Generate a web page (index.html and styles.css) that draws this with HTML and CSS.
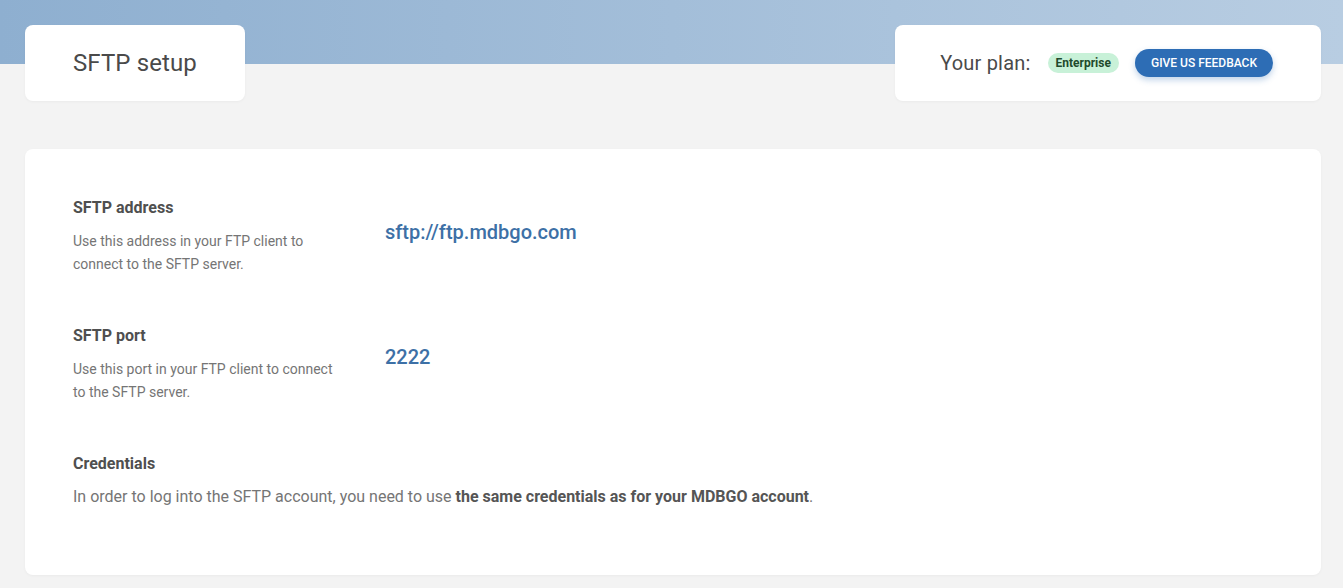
FILE: index.html
```html
<!DOCTYPE html>
<html lang="en">
<head>
<meta charset="utf-8">
<title>SFTP setup</title>
<link rel="stylesheet" href="styles.css">
</head>
<body>
<div class="page">
  <div class="top-row">
    <div class="card title-card"><h1 class="title">SFTP setup</h1></div>
    <div class="card plan-card">
      <span class="plan-label">Your plan:</span>
      <span class="badge">Enterprise</span>
      <button class="btn-feedback">GIVE US FEEDBACK</button>
    </div>
  </div>
  <div class="card main-card">
    <div class="row">
      <div class="info">
        <div class="info-title">SFTP address</div>
        <p class="info-desc">Use this address in your FTP client to connect to the SFTP server.</p>
      </div>
      <div class="value">sftp://ftp.mdbgo.com</div>
    </div>
    <div class="row">
      <div class="info">
        <div class="info-title">SFTP port</div>
        <p class="info-desc">Use this port in your FTP client to connect to the SFTP server.</p>
      </div>
      <div class="value">2222</div>
    </div>
    <div class="creds">
      <div class="info-title">Credentials</div>
      <p class="creds-text">In order to log into the SFTP account, you need to use <strong>the same credentials as for your MDBGO account</strong>.</p>
    </div>
  </div>
</div>
</body>
</html>
```

FILE: styles.css
```css
* { box-sizing: border-box; }
html, body { margin: 0; padding: 0; }
body {
  font-family: Roboto, "Noto Sans", Arial, sans-serif;
  background-color: #f3f3f3;
  background-image: linear-gradient(90deg, #8eafd0 0%, #a3bed9 50%, #b8cde2 100%);
  background-repeat: no-repeat;
  background-size: 100% 64px;
  min-height: 588px;
}
.page {
  padding: 25px 22px 0 25px;
}
.card {
  background: #fff;
  border-radius: 8px;
  box-shadow: 0 1px 3px rgba(0,0,0,0.04);
}
.top-row {
  display: flex;
  justify-content: space-between;
  align-items: flex-start;
}
.title-card {
  width: 220px;
  height: 76px;
  display: flex;
  align-items: center;
  padding: 0 48px;
}
.title {
  margin: 0;
  font-size: 24px;
  font-weight: 400;
  color: #4a4a4a;
  white-space: nowrap;
  letter-spacing: 0.1px;
}
.plan-card {
  width: 426px;
  height: 76px;
  display: flex;
  align-items: center;
  justify-content: flex-end;
  padding: 0 48px 0 20px;
}
.plan-card > * {
  flex-shrink: 0;
  white-space: nowrap;
}
.plan-label {
  font-size: 20px;
  color: #4a4a4a;
  margin-right: 17px;
  letter-spacing: 0.2px;
}
.badge {
  background: #c8f1d8;
  color: #1f4a2c;
  font-size: 12px;
  font-weight: 700;
  border-radius: 10px;
  height: 20px;
  line-height: 20px;
  padding: 0 8px;
  margin-right: 16px;
}
.btn-feedback {
  font-family: inherit;
  background: #2d6db5;
  color: #fff;
  border: 0;
  border-radius: 14px;
  height: 28px;
  padding: 0 16px;
  font-size: 12px;
  font-weight: 500;
  box-shadow: 0 3px 6px rgba(45,109,181,0.3);
}
.main-card {
  margin-top: 48px;
  padding: 48px 48px 67px 48px;
  display: flex;
  flex-direction: column;
  gap: 49px;
}
.row {
  display: flex;
  align-items: flex-start;
}
.info {
  flex: 0 0 312px;
}
.info-title {
  font-size: 16px;
  font-weight: 700;
  color: #4f4f4f;
  line-height: 22px;
}
.info-desc {
  margin: 11px 0 0 0;
  max-width: 270px;
  font-size: 14px;
  line-height: 23px;
  color: #757575;
}
.value {
  margin-top: 23px;
  font-size: 20px;
  line-height: 24px;
  font-weight: 500;
  color: #3d70a6;
}
.row + .row .value {
  margin-top: 20px;
}
.creds-text {
  margin: 11px 0 0 0;
  font-size: 16px;
  line-height: 22px;
  color: #757575;
}
.creds-text strong {
  color: #555;
  font-weight: 700;
}
```
